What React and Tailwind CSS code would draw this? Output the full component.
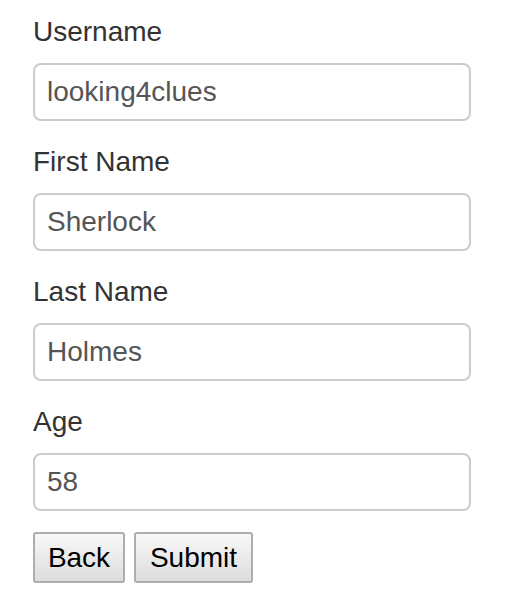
const FIELDS = [
  { label: 'Username', value: 'looking4clues' },
  { label: 'First Name', value: 'Sherlock' },
  { label: 'Last Name', value: 'Holmes' },
  { label: 'Age', value: '58' },
]

export default function App() {
  return (
    <div className="bg-white min-h-screen pl-[33px] pt-[12px] font-['Liberation_Sans',Arial,sans-serif]">
      <form className="w-[438px]" onSubmit={e => e.preventDefault()}>
        {FIELDS.map(f => (
          <div key={f.label} className="mb-[21px]">
            <label className="block text-[28px] leading-[40px] text-[#333]">{f.label}</label>
            <input
              defaultValue={f.value}
              className="mt-[11px] block w-full h-[58px] px-[12px] border-2 border-[#cccccc] rounded-[8px] text-[28px] leading-[40px] text-[#555] bg-white outline-none"
            />
          </div>
        ))}
        <div className="flex gap-[9px]">
          <button type="button"
            className="h-[51px] w-[92px] border-2 border-[#adadad] rounded-[3px] bg-gradient-to-b from-[#f8f8f8] to-[#dddddd] text-[28px] text-black">
            Back
          </button>
          <button type="submit"
            className="h-[51px] w-[119px] border-2 border-[#adadad] rounded-[3px] bg-gradient-to-b from-[#f8f8f8] to-[#dddddd] text-[28px] text-black">
            Submit
          </button>
        </div>
      </form>
    </div>
  )
}
